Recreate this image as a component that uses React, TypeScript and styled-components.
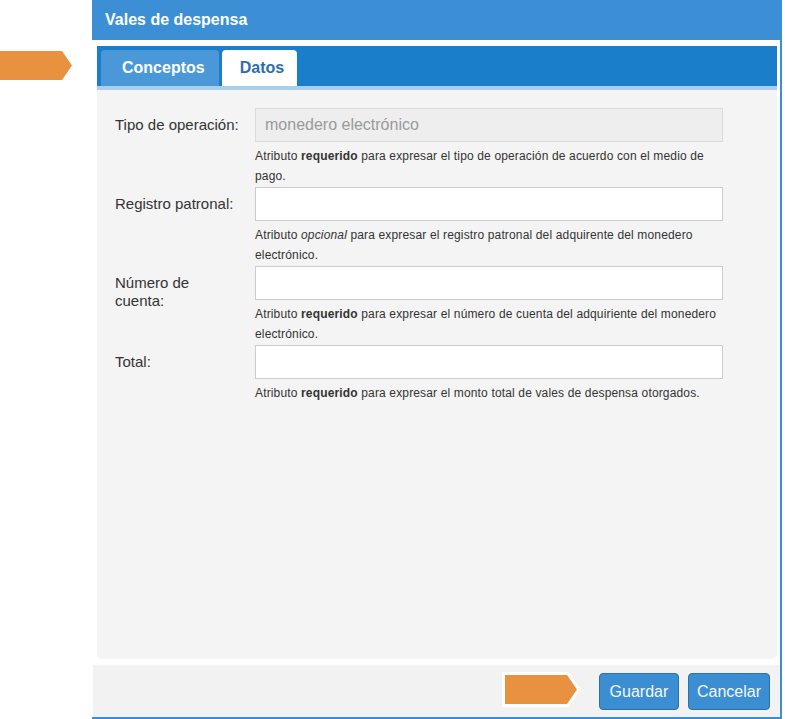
import React from "react";
import styled, { createGlobalStyle } from "styled-components";

const GlobalStyle = createGlobalStyle`
  html, body {
    margin: 0;
    padding: 0;
    background: #ffffff;
    font-family: "Liberation Sans", Arial, sans-serif;
  }
`;

const fields = [
  {
    label: "Tipo de operación:",
    value: "monedero electrónico",
    disabled: true,
    help: (
      <>
        Atributo <b>requerido</b> para expresar el tipo de operación de acuerdo con el medio de pago.
      </>
    ),
  },
  {
    label: "Registro patronal:",
    help: (
      <>
        Atributo <i>opcional</i> para expresar el registro patronal del adquirente del monedero electrónico.
      </>
    ),
  },
  {
    label: "Número de cuenta:",
    help: (
      <>
        Atributo <b>requerido</b> para expresar el número de cuenta del adquiriente del monedero electrónico.
      </>
    ),
  },
  {
    label: "Total:",
    help: (
      <>
        Atributo <b>requerido</b> para expresar el monto total de vales de despensa otorgados.
      </>
    ),
  },
];

function Arrow({ outlined }: { outlined?: boolean }) {
  return (
    <svg width="80" height="37" viewBox="-4 -4 80 37">
      <polygon
        points="0,0 62,0 72,14.5 62,29 0,29"
        fill="#e8913f"
        stroke={outlined ? "#ffffff" : "none"}
        strokeWidth={outlined ? 6 : 0}
        paintOrder="stroke"
      />
    </svg>
  );
}

export default function App() {
  return (
    <Page>
      <GlobalStyle />
      <TopArrow>
        <Arrow />
      </TopArrow>
      <Dialog>
        <TitleBar>Vales de despensa</TitleBar>
        <Inner>
          <TabBar>
            <Tab>Conceptos</Tab>
            <Tab $active>Datos</Tab>
          </TabBar>
          <TabStrip />
          <Content>
            {fields.map((f) => (
              <Row key={f.label}>
                <Label>{f.label}</Label>
                <Field>
                  <Input
                    readOnly
                    disabled={f.disabled}
                    defaultValue={f.value ?? ""}
                  />
                  <Help>{f.help}</Help>
                </Field>
              </Row>
            ))}
          </Content>
        </Inner>
        <Footer>
          <FooterArrow>
            <Arrow outlined />
          </FooterArrow>
          <Button>Guardar</Button>
          <Button>Cancelar</Button>
        </Footer>
      </Dialog>
    </Page>
  );
}

const Page = styled.div`
  position: relative;
  width: 785px;
  height: 719px;
  overflow: hidden;
`;

const TopArrow = styled.div`
  position: absolute;
  left: -4px;
  top: 47px;
  line-height: 0;
`;

const Dialog = styled.div`
  margin-left: 92px;
  width: 688px;
  height: 717px;
  border-right: 2px solid #3a8ed3;
  border-bottom: 2px solid #3a8ed3;
  background: #ffffff;
  display: flex;
  flex-direction: column;
`;

const TitleBar = styled.div`
  height: 40px;
  background: #3c8fd4;
  color: #ffffff;
  font-weight: bold;
  font-size: 16px;
  line-height: 40px;
  padding-left: 13px;
`;

const Inner = styled.div`
  flex: 1;
  display: flex;
  flex-direction: column;
  padding: 6px 3px 0 5px;
`;

const TabBar = styled.div`
  height: 40px;
  background: #1a7eca;
  display: flex;
  align-items: flex-end;
  gap: 3px;
  padding-left: 4px;
  box-sizing: border-box;
`;

const Tab = styled.div<{ $active?: boolean }>`
  height: 36px;
  box-sizing: border-box;
  padding: ${(p) => (p.$active ? "0 13px 0 18px" : "0 14px 0 21px")};
  display: flex;
  align-items: center;
  border-radius: 4px 4px 0 0;
  font-weight: bold;
  font-size: 16px;
  background: ${(p) => (p.$active ? "#ffffff" : "#4a98d7")};
  color: ${(p) => (p.$active ? "#2c6db0" : "#ffffff")};
`;

const TabStrip = styled.div`
  height: 4px;
  background: #a9cfec;
`;

const Content = styled.div`
  flex: 1;
  background: #f4f4f4;
  border-radius: 0 0 5px 5px;
  padding: 18px 54px 0 18px;
  display: flex;
  flex-direction: column;
`;

const Row = styled.div`
  display: flex;
  align-items: flex-start;
  height: 79px;
  flex: none;
`;

const Label = styled.div`
  width: 140px;
  box-sizing: border-box;
  padding: 8px 14px 0 0;
  font-size: 15px;
  line-height: 18px;
  color: #333333;
`;

const Field = styled.div`
  flex: 1;
  display: flex;
  flex-direction: column;
`;

const Input = styled.input`
  height: 34px;
  box-sizing: border-box;
  border: 1px solid ${(p) => (p.disabled ? "#dcdcdc" : "#cccccc")};
  background: ${(p) => (p.disabled ? "#eeeeee" : "#ffffff")};
  padding: 0 9px;
  font-family: "Liberation Sans", Arial, sans-serif;
  font-size: 16px;
  color: #9a9a9a;
  outline: none;
  width: 100%;
`;

const Help = styled.div`
  margin-top: 4px;
  font-size: 12px;
  letter-spacing: 0.15px;
  line-height: 20px;
  color: #333333;
`;

const Footer = styled.div`
  position: relative;
  margin: 6px 0 0 1px;
  height: 52px;
  box-sizing: border-box;
  background: #f2f2f2;
  display: flex;
  justify-content: flex-end;
  align-items: flex-start;
  gap: 9px;
  padding: 8px 10px 0 0;
`;

const FooterArrow = styled.div`
  position: absolute;
  left: 408px;
  top: 6px;
  line-height: 0;
`;

const Button = styled.button`
  height: 37px;
  padding: 0 8px;
  min-width: 80px;
  border: 1px solid #2c6fa9;
  border-radius: 4px;
  background: #3b8ed1;
  color: #f4f8fc;
  font-family: "Liberation Sans", Arial, sans-serif;
  font-size: 16px;
`;
